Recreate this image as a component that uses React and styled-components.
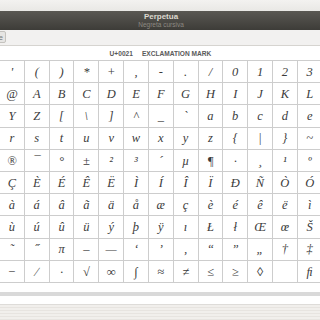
import React from "react";
import styled, { createGlobalStyle } from "styled-components";

const Global = createGlobalStyle`
  html, body { margin: 0; padding: 0; background: #ffffff; }
  #root { width: 320px; height: 320px; overflow: hidden; }
`;

const Screen = styled.div`
  width: 320px;
  height: 320px;
  display: flex;
  flex-direction: column;
  overflow: hidden;
  background: #ffffff;
  font-family: "Liberation Sans", Arial, sans-serif;
`;

const TopStrip = styled.div`
  height: 11px;
  flex: none;
  background: linear-gradient(#f3f2f0, #e9e8e5);
`;

const TitleBar = styled.div`
  height: 19px;
  flex: none;
  background: linear-gradient(#5a5853, #3d3c38);
  display: flex;
  flex-direction: column;
  align-items: center;
  justify-content: center;
  line-height: 1;
`;

const Title = styled.div`
  font-size: 8px;
  font-weight: bold;
  color: #dcd8cf;
  transform: translateX(1px);
`;

const Subtitle = styled.div`
  font-size: 6.5px;
  color: #8c8982;
  margin-top: 1px;
  transform: translateX(1px);
`;

const Toolbar = styled.div`
  height: 15px;
  flex: none;
  background: #f2f1f0;
  border-bottom: 1px solid #d6d4d0;
  display: flex;
  align-items: flex-start;
`;

const ToolButton = styled.div`
  margin-top: 1px;
  margin-left: -20px;
  width: 26px;
  height: 12px;
  box-sizing: border-box;
  border: 1px solid #c4c2be;
  border-radius: 2px;
  background: #e6e5e3;
  font-size: 8px;
  color: #777;
  display: flex;
  align-items: center;
  justify-content: flex-end;
  padding-right: 2px;
`;

const Content = styled.div`
  flex: 1;
  background: #ffffff;
  display: flex;
  flex-direction: column;
`;

const Header = styled.div`
  height: 14px;
  display: flex;
  align-items: center;
  justify-content: center;
  gap: 9px;
  font-size: 6.6px;
  font-weight: bold;
  color: #5a5a5a;
  padding-left: 1px;
`;

const Grid = styled.div`
  display: grid;
  grid-template-columns: repeat(13, 24.82px);
  grid-auto-rows: 22.2px;
  margin-left: -1px;
  border-top: 1px solid #cdcdcd;
  border-left: 1px solid #cdcdcd;
  width: max-content;
`;

const Cell = styled.div`
  box-sizing: border-box;
  border-right: 1px solid #cdcdcd;
  border-bottom: 1px solid #cdcdcd;
  display: flex;
  align-items: center;
  justify-content: center;
  font-family: "Liberation Serif", "DejaVu Serif", serif;
  font-style: italic;
  font-size: 12.5px;
  color: #3b3b3b;
  line-height: 1;
  padding-top: 1px;
`;

const Spacer = styled.div`
  height: 9px;
`;

const ScrollBar = styled.div`
  height: 4px;
  background: #d9d9d9;
`;

const Gap = styled.div`
  flex: 1;
`;

const StatusBar = styled.div`
  height: 15px;
  flex: none;
  border-top: 1px solid #dedcd9;
  background: repeating-linear-gradient(#f1efec 0px, #f1efec 2px, #e7e4e0 2px, #e7e4e0 3px);
`;

const rows = [
  ["'", "(", ")", "*", "+", ",", "-", ".", "/", "0", "1", "2", "3"],
  ["@", "A", "B", "C", "D", "E", "F", "G", "H", "I", "J", "K", "L"],
  ["Y", "Z", "[", "\\", "]", "^", "_", "`", "a", "b", "c", "d", "e"],
  ["r", "s", "t", "u", "v", "w", "x", "y", "z", "{", "|", "}", "~"],
  ["®", "¯", "°", "±", "²", "³", "´", "µ", "¶", "·", "¸", "¹", "º"],
  ["Ç", "È", "É", "Ê", "Ë", "Ì", "Í", "Î", "Ï", "Đ", "Ñ", "Ò", "Ó"],
  ["à", "á", "â", "ã", "ä", "å", "æ", "ç", "è", "é", "ê", "ë", "ì"],
  ["ù", "ú", "û", "ü", "ý", "þ", "ÿ", "ı", "Ł", "ł", "Œ", "œ", "Š"],
  ["˜", "˝", "π", "–", "—", "‘", "’", "‚", "“", "”", "„", "†", "‡"],
  ["−", "∕", "·", "√", "∞", "∫", "≈", "≠", "≤", "≥", "◊", "", "ﬁ"],
];

export default function App() {
  return (
    <>
      <Global />
      <Screen>
        <TopStrip />
        <TitleBar>
          <Title>Perpetua</Title>
          <Subtitle>Negreta cursiva</Subtitle>
        </TitleBar>
        <Toolbar>
          <ToolButton>e</ToolButton>
        </Toolbar>
        <Content>
          <Header>
            <span>U+0021</span>
            <span>EXCLAMATION MARK</span>
          </Header>
          <Grid>
            {rows.flatMap((r, i) =>
              r.map((c, j) => <Cell key={i + "-" + j}>{c}</Cell>)
            )}
          </Grid>
          <Spacer />
          <ScrollBar />
          <Gap />
        </Content>
        <StatusBar />
      </Screen>
    </>
  );
}
